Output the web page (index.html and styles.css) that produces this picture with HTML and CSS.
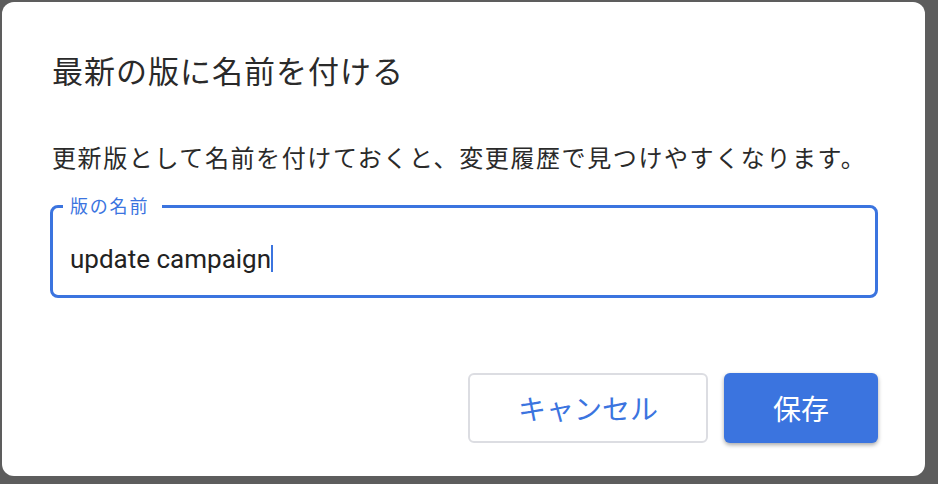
FILE: index.html
```html
<!DOCTYPE html>
<html lang="ja">
<head>
<meta charset="utf-8">
<title>最新の版に名前を付ける</title>
<link rel="stylesheet" href="styles.css">
</head>
<body>
<div class="dialog">
  <h1 class="title">最新の版に名前を付ける</h1>
  <p class="desc">更新版として名前を付けておくと、変更履歴で見つけやすくなります。</p>
  <div class="field">
    <span class="field-label">版の名前</span>
    <div class="field-value">update campaign<span class="caret"></span></div>
  </div>
  <div class="actions">
    <button class="btn btn-cancel">キャンセル</button>
    <button class="btn btn-save">保存</button>
  </div>
</div>
</body>
</html>
```

FILE: styles.css
```css
html, body {
  margin: 0;
  padding: 0;
}
body {
  background: #5d5d5d;
  width: 938px;
  height: 484px;
  overflow: hidden;
  font-family: "Noto Sans CJK JP", "Noto Sans", sans-serif;
  color: #2a2a2a;
}
.dialog {
  margin: 2px 0 0 2px;
  width: 923px;
  height: 474px;
  box-sizing: border-box;
  background: #fff;
  border-radius: 12px;
  padding: 48px 47px 33px 48px;
  display: flex;
  flex-direction: column;
}
.title {
  margin: 0;
  font-size: 31px;
  font-weight: 400;
  line-height: 40px;
  height: 40px;
  letter-spacing: 1px;
  padding-left: 2px;
}
.desc {
  margin: 51px 0 0 0;
  font-size: 24px;
  line-height: 32px;
  height: 32px;
  letter-spacing: 1.6px;
  padding-left: 2px;
  white-space: nowrap;
}
.field {
  position: relative;
  margin-top: 32px;
  height: 93px;
  box-sizing: border-box;
  border: 3px solid #3b74df;
  border-radius: 8px;
  display: flex;
  align-items: center;
  padding-left: 17px;
}
.field-label {
  position: absolute;
  left: 10px;
  top: -15px;
  background: #fff;
  padding: 0 13px 0 7px;
  font-size: 18px;
  line-height: 24px;
  letter-spacing: 1.8px;
  color: #3b74df;
}
.field-value {
  font-family: Roboto, "Noto Sans", sans-serif;
  font-size: 26px;
  line-height: 32px;
  color: #222;
  display: flex;
  align-items: center;
  margin-top: 14px;
}
.caret {
  display: inline-block;
  width: 2px;
  height: 27px;
  background: #3b74df;
  margin-left: 0;
}
.actions {
  margin-top: auto;
  display: flex;
  justify-content: flex-end;
  gap: 16px;
}
.btn {
  height: 70px;
  border-radius: 6px;
  font-family: "Noto Sans CJK JP", sans-serif;
  font-size: 28px;
  line-height: 1;
  padding: 0;
  cursor: pointer;
}
.btn-cancel {
  width: 240px;
  background: #fff;
  border: 2px solid #dcdde2;
  color: #3b74df;
}
.btn-save {
  width: 154px;
  background: #3b74df;
  border: none;
  color: #fff;
  box-shadow: 0 2px 4px rgba(0, 0, 0, 0.35);
}
```
